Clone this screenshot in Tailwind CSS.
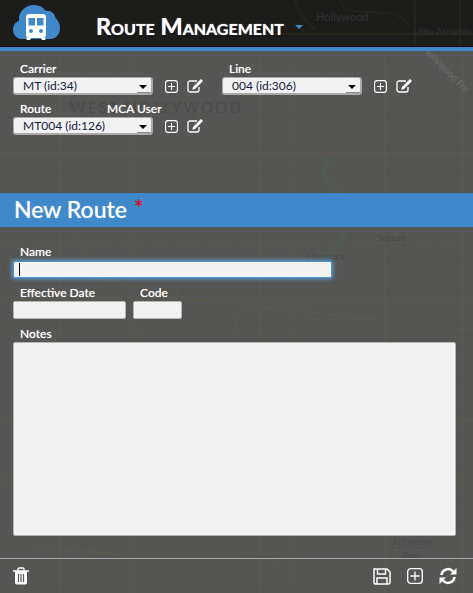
<!doctype html>
<html><head><meta charset="utf-8"><script src="https://cdn.jsdelivr.net/npm/@tailwindcss/browser@4"></script></head>
<body class="m-0">
<div class="relative w-[473px] h-[593px] overflow-hidden bg-[#555553] font-['Lato',sans-serif] flex flex-col">
  <!-- map -->
  <svg class="absolute inset-0 pointer-events-none" width="473" height="593" fill="none">
    <defs><pattern id="g" width="11" height="11" patternUnits="userSpaceOnUse"><path d="M0 .5H11M.5 0V11" stroke="#585856" stroke-width="1"/></pattern></defs>
    <rect width="473" height="593" fill="url(#g)"/>
    <g stroke="#5e5a4d" stroke-width="1">
      <path d="M0 153H473M0 240H473M0 300H473M0 420H473M0 480H473M60 51V593M130 51V593M260 51V593M290 51V593M385 51V593M462 51V593"/>
      <path d="M0 260L80 275 200 300 473 330M60 200L110 300 160 360 220 470M230 300L250 380M30 545L120 555 280 560"/>
    </g>
    <path d="M328 158C320 175 325 190 345 195M345 232C340 250 325 255 320 262" stroke="#535a52" stroke-width="7"/>
    <g fill="#4a4a49" font-family="Lato" font-size="11">
      <text x="70" y="113" font-size="15" letter-spacing="2.200">WEST HOLLYWOOD</text>
      <text x="307" y="260" font-size="10">Hancock</text>
      <text x="377" y="241" font-size="10">Square</text>
      <text x="392" y="545" font-size="10">Jefferson</text>
      <text x="402" y="559" font-size="10">Park</text>
    </g>
    <text x="422" y="50" transform="rotate(45 422 50)" fill="#6e6e6c" font-family="Lato" font-size="9.500">Hollywood Fre</text>
  </svg>

  <header class="relative h-[47px] bg-[#1c1c1b] border-b border-black flex items-center shrink-0">
    <svg class="absolute left-0 top-0" width="473" height="46" fill="none">
      <path d="M295 0L300 14 316 30M340 0L345 10 395 14 412 26M415 0V46M460 0V46M240 34H473" stroke="#262319" stroke-width="2"/>
      <g fill="#333331" font-family="Lato">
        <text x="316" y="21" font-size="11">Hollywood</text>
        <text x="413" y="35" font-size="9.500">Little Armenia</text>
      </g>
    </svg>
    <svg class="absolute left-[12px] top-[3px]" width="49" height="37" viewBox="0 0 49 37">
      <path fill="#3f89cb" d="M10 36C4 36 1 31 1 26.500C1 22 4 18.500 7 18C6 9 13 2 22 2C27 2 31 4 34 8C38 7 43 10 43.500 15C46.500 18 48 21 48 25.500C48 31 44 36 38 36Z"/>
      <rect x="14" y="11" width="20" height="24" rx="3" fill="#fff"/>
      <rect x="16.500" y="15" width="6.500" height="7.500" fill="#3f89cb"/>
      <rect x="25" y="15" width="6.500" height="7.500" fill="#3f89cb"/>
      <circle cx="19" cy="28" r="2" fill="#3f89cb"/><circle cx="29" cy="28" r="2" fill="#3f89cb"/>
      <path d="M14 35h5l-1 2h-3ZM29 35h5l-1 2h-3Z" fill="#fff"/>
    </svg>
    <h1 class="relative ml-[96px] mt-[7px] text-[23.500px] leading-none font-bold text-white [font-variant:small-caps] whitespace-nowrap [text-shadow:0_0_1px_#fff,0_1px_2px_#000]">Route Management</h1>
    <span class="relative ml-[11px] mt-[8px] w-0 h-0 border-x-[4px] border-x-transparent border-t-[4px] border-t-[#3f89cb]"></span>
  </header>
  <div class="relative h-[4px] bg-[#3f89cb] shrink-0"></div>

  <main class="relative flex flex-col flex-1 min-h-0">
    <section class="h-[142px] pl-[13px] pt-[9px] shrink-0">
      <div class="flex">
        <div class="w-[209px]">
          <label class="block ml-[7px] h-[17px] text-xs leading-[17px] font-medium text-white [text-shadow:0_0_1px_#ffffff80]">Carrier</label>
          <div class="flex items-center">
            <div class="relative w-[140px] h-[18px] rounded-[3px] bg-[#f2f2f2] border border-b-2 border-r-2 border-[#a9a9a9] pl-[9px] text-[12px] leading-[16px] text-[#14213f]">MT (id:34)
              <span class="absolute right-[4px] top-[7px] w-0 h-0 border-x-[4px] border-x-transparent border-t-[4px] border-t-black"></span>
              <span class="absolute right-0 bottom-0 w-[14px] h-px bg-[#8f8f8f]"></span>
            </div>
            <svg class="ml-[12px]" width="13" height="13" viewBox="0 0 13 13" fill="none" stroke="#fff" stroke-width="1.100"><rect x=".6" y=".6" width="11.800" height="11.800" rx="2.500"/><path d="M6.500 3v7M3 6.500h7"/></svg>
            <svg class="ml-[9px]" width="17" height="14" viewBox="0 0 17 14" fill="none"><path d="M12 8v3a2 2 0 0 1-2 2H3a2 2 0 0 1-2-2V4a2 2 0 0 1 2-2h7" stroke="#fff" stroke-width="1.300"/><path d="M6 8l-.7 2.700L8 10l8-8-2-2Z" fill="#fff"/></svg>
          </div>
        </div>
        <div>
          <label class="block ml-[7px] h-[17px] text-xs leading-[17px] font-medium text-white [text-shadow:0_0_1px_#ffffff80]">Line</label>
          <div class="flex items-center">
            <div class="relative w-[140px] h-[18px] rounded-[3px] bg-[#f2f2f2] border border-b-2 border-r-2 border-[#a9a9a9] pl-[9px] text-[12px] leading-[16px] text-[#14213f]">004 (id:306)
              <span class="absolute right-[4px] top-[7px] w-0 h-0 border-x-[4px] border-x-transparent border-t-[4px] border-t-black"></span>
              <span class="absolute right-0 bottom-0 w-[14px] h-px bg-[#8f8f8f]"></span>
            </div>
            <svg class="ml-[12px]" width="13" height="13" viewBox="0 0 13 13" fill="none" stroke="#fff" stroke-width="1.100"><rect x=".6" y=".6" width="11.800" height="11.800" rx="2.500"/><path d="M6.500 3v7M3 6.500h7"/></svg>
            <svg class="ml-[9px]" width="17" height="14" viewBox="0 0 17 14" fill="none"><path d="M12 8v3a2 2 0 0 1-2 2H3a2 2 0 0 1-2-2V4a2 2 0 0 1 2-2h7" stroke="#fff" stroke-width="1.300"/><path d="M6 8l-.7 2.700L8 10l8-8-2-2Z" fill="#fff"/></svg>
          </div>
        </div>
      </div>
      <div class="mt-[5px]">
        <div class="flex h-[17px] text-xs leading-[17px] font-medium text-white [text-shadow:0_0_1px_#ffffff80]">
          <label class="ml-[7px] w-[87px]">Route</label>
          <label>MCA User</label>
        </div>
        <div class="flex items-center">
          <div class="relative w-[140px] h-[18px] rounded-[3px] bg-[#f2f2f2] border border-b-2 border-r-2 border-[#a9a9a9] pl-[9px] text-[12px] leading-[16px] text-[#14213f]">MT004 (id:126)
            <span class="absolute right-[4px] top-[7px] w-0 h-0 border-x-[4px] border-x-transparent border-t-[4px] border-t-black"></span>
            <span class="absolute right-0 bottom-0 w-[14px] h-px bg-[#8f8f8f]"></span>
          </div>
          <svg class="ml-[12px]" width="13" height="13" viewBox="0 0 13 13" fill="none" stroke="#fff" stroke-width="1.100"><rect x=".6" y=".6" width="11.800" height="11.800" rx="2.500"/><path d="M6.500 3v7M3 6.500h7"/></svg>
          <svg class="ml-[9px]" width="17" height="14" viewBox="0 0 17 14" fill="none"><path d="M12 8v3a2 2 0 0 1-2 2H3a2 2 0 0 1-2-2V4a2 2 0 0 1 2-2h7" stroke="#fff" stroke-width="1.300"/><path d="M6 8l-.7 2.700L8 10l8-8-2-2Z" fill="#fff"/></svg>
        </div>
      </div>
    </section>

    <div class="h-[34px] bg-[#3f89cb] pl-[14px] flex items-start shrink-0">
      <h2 class="text-[23px] leading-[33px] font-medium text-white [text-shadow:0_0_1px_#ffffff80]">New Route</h2>
      <span class="ml-[7px] mt-[4px] text-[22px] leading-[22px] font-bold text-[#c8102e]">*</span>
    </div>

    <form class="pl-[13px] pt-[16px] shrink-0">
      <label class="block ml-[7px] h-[18px] text-xs leading-[18px] font-medium text-white [text-shadow:0_0_1px_#ffffff80]">Name</label>
      <div class="w-[319px] h-[17px] rounded-[2px] bg-[#f2f2f2] border border-[#4f95d6] shadow-[0_0_4px_1px_#5b9dd9] flex items-center pl-[5px]"><span class="w-px h-[13px] bg-black"></span></div>
      <div class="flex mt-[6px]">
        <div class="w-[120px]">
          <label class="block ml-[7px] h-[17px] text-xs leading-[17px] font-medium text-white [text-shadow:0_0_1px_#ffffff80]">Effective Date</label>
          <div class="w-[113px] h-[18px] rounded-[2px] bg-[#f2f2f2] border border-[#b5b5b5]"></div>
        </div>
        <div>
          <label class="block ml-[7px] h-[17px] text-xs leading-[17px] font-medium text-white [text-shadow:0_0_1px_#ffffff80]">Code</label>
          <div class="w-[49px] h-[18px] rounded-[2px] bg-[#f2f2f2] border border-[#b5b5b5]"></div>
        </div>
      </div>
      <label class="block mt-[6px] ml-[7px] h-[17px] text-xs leading-[17px] font-medium text-white [text-shadow:0_0_1px_#ffffff80]">Notes</label>
      <div class="w-[443px] h-[194px] rounded-[2px] bg-[#f2f2f2] border border-[#b5b5b5]"></div>
    </form>

    <footer class="mt-auto h-[35px] border-t border-[#a8a8a8] flex items-center pl-[13px] pr-[16px] shrink-0">
      <svg width="16" height="18" viewBox="0 0 16 18" fill="none"><path d="M0 4h16" stroke="#fff" stroke-width="1.500"/><path d="M5 3.500V2a1 1 0 0 1 1-1h4a1 1 0 0 1 1 1v1.500" stroke="#fff" stroke-width="1.400"/><path d="M2 4h12v11.500a2 2 0 0 1-2 2H4a2 2 0 0 1-2-2Z" fill="#fff"/><path d="M5.500 7v8M8 7v8M10.500 7v8" stroke="#555553" stroke-width="1.200"/></svg>
      <svg class="ml-auto" width="18" height="17" viewBox="0 0 18 17" fill="none" stroke="#fff" stroke-width="1.500"><path d="M1 1h13l3 3v10.500a1.500 1.500 0 0 1-1.500 1.500h-13A1.500 1.500 0 0 1 1 14.500Z"/><path d="M4.500 1v5h8V1M4 16v-6h10v6"/></svg>
      <svg class="ml-[16px]" width="16" height="16" viewBox="0 0 16 16" fill="none" stroke="#fff" stroke-width="1.300"><rect x=".7" y=".7" width="14.600" height="14.600" rx="3"/><path d="M8 3.500v9M3.500 8h9"/></svg>
      <svg class="ml-[16px]" width="18" height="18" viewBox="0 0 18 18" fill="none"><path d="M2.500 8A6.500 6.500 0 0 1 14 4.500" stroke="#fff" stroke-width="2.600"/><path d="M17.500 1v6.500H11Z" fill="#fff"/><path d="M15.500 10A6.500 6.500 0 0 1 4 13.500" stroke="#fff" stroke-width="2.600"/><path d="M.5 17v-6.500H7Z" fill="#fff"/></svg>
    </footer>
  </main>
</div>
</body></html>
